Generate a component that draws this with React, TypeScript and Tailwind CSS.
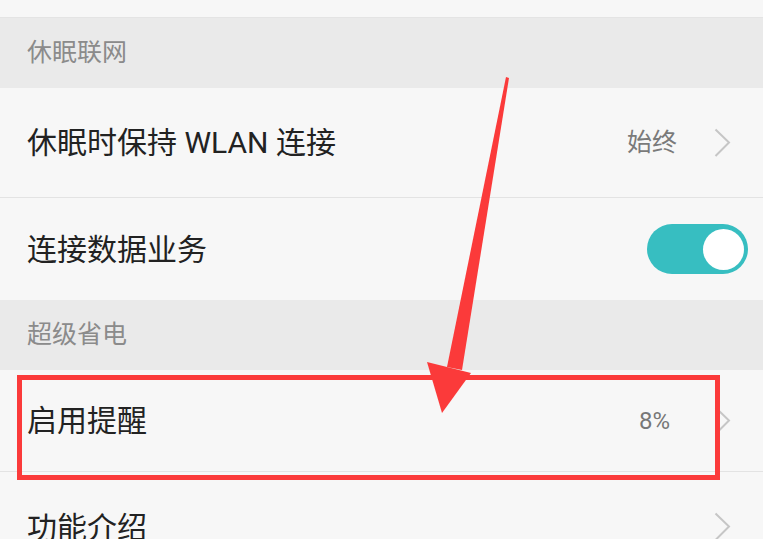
import React from "react";

const font = { fontFamily: 'Roboto, "Noto Sans CJK SC", sans-serif' };

function Chevron() {
  return (
    <svg width="17" height="30" viewBox="0 0 17 30" className="shrink-0">
      <polyline points="1.5,1.5 15,14.5 1.5,28" fill="none" stroke="#c6c6c6" strokeWidth="2" />
    </svg>
  );
}

function SectionHeader({ label }: { label: string }) {
  return (
    <div className="h-[70px] bg-[#eaeaea] flex items-center pl-[27px] text-[25px] text-[#8b8b8b]">
      {label}
    </div>
  );
}

export default function App() {
  return (
    <div
      className="relative w-[763px] h-[539px] overflow-hidden bg-[#f7f7f7] text-[#222]"
      style={font}
    >
      {/* top strip */}
      <div className="h-[18px] bg-[#f7f7f7] border-b border-[#e4e4e4]" />

      <SectionHeader label="休眠联网" />

      <div className="h-[110px] flex items-center justify-between pl-[27px] pr-[32px] border-b border-[#e3e3e3]">
        <span className="text-[30px]">休眠时保持 WLAN 连接</span>
        <div className="flex items-center gap-[37px]">
          <span className="text-[25px] text-[#7a7a7a]">始终</span>
          <Chevron />
        </div>
      </div>

      <div className="h-[102px] flex items-center justify-between pl-[27px] pr-[15px]">
        <span className="text-[30px]">连接数据业务</span>
        <div className="w-[101px] h-[50px] rounded-full bg-[#37bec1] flex items-center justify-end pr-[4px]">
          <div className="w-[41px] h-[41px] rounded-full bg-white" />
        </div>
      </div>

      <SectionHeader label="超级省电" />

      <div className="h-[102px] flex items-center justify-between pl-[27px] pr-[32px] border-b border-[#e3e3e3]">
        <span className="text-[30px]">启用提醒</span>
        <div className="flex items-center gap-[44px]">
          <span className="text-[24px] text-[#777]">8%</span>
          <Chevron />
        </div>
      </div>

      <div className="h-[110px] flex items-center justify-between pl-[27px] pr-[32px]">
        <span className="text-[30px]">功能介绍</span>
        <Chevron />
      </div>

      {/* annotation: red box */}
      <div className="absolute left-[17px] top-[375px] w-[703px] h-[105px] border-[5px] border-[#fb3a3a]" />

      {/* annotation: red arrow */}
      <svg className="absolute inset-0 pointer-events-none" width="763" height="539" viewBox="0 0 763 539">
        <polygon points="506,77 509,78 462,370 447,367" fill="#fb3a3a" />
        <polygon points="427,362 471,373 442,413" fill="#fb3a3a" />
      </svg>
    </div>
  );
}
